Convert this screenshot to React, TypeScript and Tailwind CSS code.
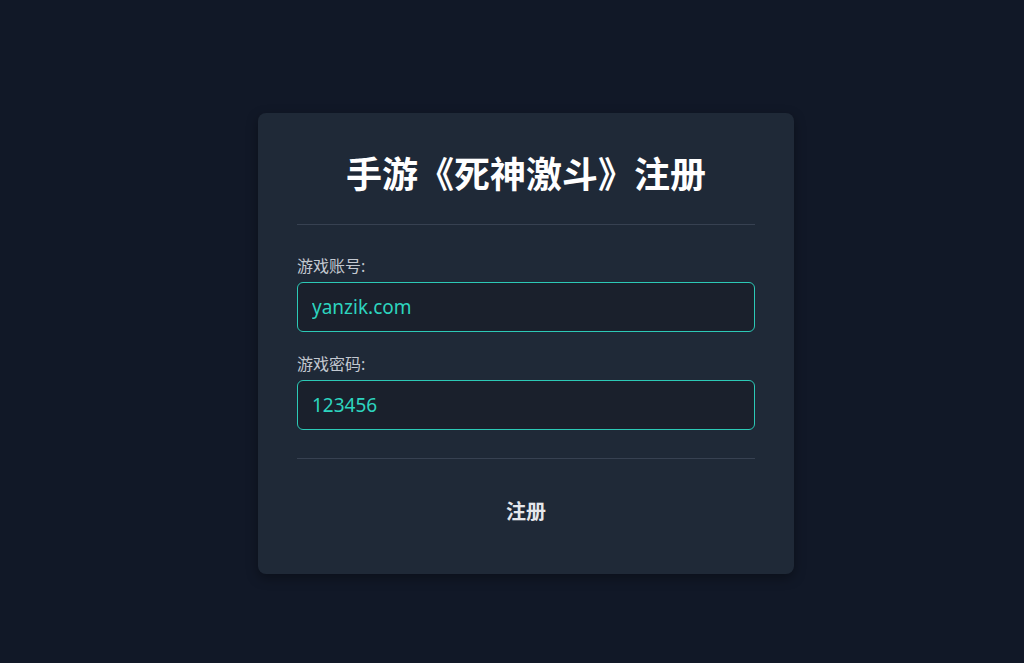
import React from "react";

export default function App() {
  const [account, setAccount] = React.useState("yanzik.com");
  const [password, setPassword] = React.useState("123456");

  return (
    <div
      className="min-h-[663px] w-full bg-[#111827] flex justify-center pt-[113px] pl-[28px]"
      style={{ fontFamily: '"Noto Sans", "Noto Sans CJK SC", sans-serif' }}
    >
      <div className="w-[536px] h-[461px] bg-[#1f2937] rounded-lg shadow-[0_4px_12px_rgba(0,0,0,0.35)] px-[39px] pt-[40px]">
        <h1 className="text-[36px] leading-[44px] font-bold text-white text-center pb-[27px] border-b border-[#374151]">
          手游《死神激斗》注册
        </h1>

        <div className="mt-[31px]">
          <label className="block text-base leading-5 text-[#c3c8d0] mb-[6px]">游戏账号:</label>
          <input
            value={account}
            onChange={(e) => setAccount(e.target.value)}
            className="w-full h-[50px] rounded-md border border-[#2cc9b6] bg-[#1a202c] px-[14px] text-[19px] text-[#2dd4bf] outline-none"
          />
        </div>

        <div className="mt-[22px]">
          <label className="block text-base leading-5 text-[#c3c8d0] mb-[6px]">游戏密码:</label>
          <input
            value={password}
            onChange={(e) => setPassword(e.target.value)}
            className="w-full h-[50px] rounded-md border border-[#2cc9b6] bg-[#1a202c] px-[14px] text-[19px] text-[#2dd4bf] outline-none"
          />
        </div>

        <div className="mt-[28px] border-t border-[#374151]" />

        <div className="flex justify-center mt-[29px]">
          <button className="px-6 py-3 text-[20px] leading-6 font-bold text-[#e5e7eb]">注册</button>
        </div>
      </div>
    </div>
  );
}
